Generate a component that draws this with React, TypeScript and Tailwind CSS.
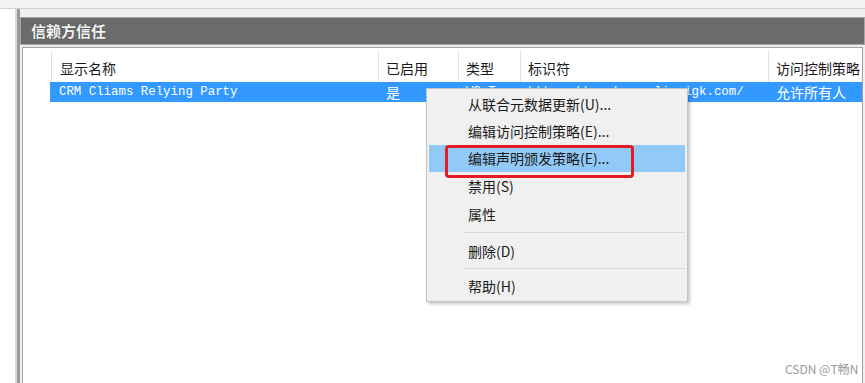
import React from "react";

const cjk = { fontFamily: '"Noto Sans CJK SC", "Noto Sans", sans-serif' };
const mono = { fontFamily: '"Liberation Mono", "Noto Sans CJK SC", monospace' };

function MenuItem({ label, h, active }: { label: string; h: string; active?: boolean }) {
  return (
    <div className={`${h} flex items-center pl-[39px] text-[14px] text-[#1b1b1b] ${active ? "bg-[#91c9f7]" : ""}`}>
      {label}
    </div>
  );
}

function Sep({ h, mt }: { h: string; mt: string }) {
  return (
    <div className={`${h} flex flex-col`}>
      <div className={`${mt} ml-[34px] h-[1px] bg-[#d7d7d7]`} />
    </div>
  );
}

export default function App() {
  return (
    <div className="relative w-[865px] h-[383px] overflow-hidden bg-[#f0f0f0] flex flex-col" style={cjk}>
      <div className="h-[8px] bg-[#f3f3f3]" />
      <div className="h-[1px] bg-[#d4d4d4]" />
      <div className="flex flex-1 min-h-0">
        <div className="w-[15px] bg-white" />
        <div className="w-[2px] bg-[#dadada]" />
        <div className="w-[3px] bg-[#9b9b9b]" />
        <div className="flex-1 flex flex-col pt-[8px] bg-[#f0f0f0] min-w-0">
          <div className="h-[28px] bg-[#6b6b6b] border border-[#a5a5a5] flex items-center px-[10px] text-[15px] font-bold text-[#f4f4f4] [text-shadow:0_0_1px_#333]">
            信赖方信任
          </div>
          <div className="h-[2px] bg-[#ececec]" />
          <div className="flex-1 mx-[2px] bg-white border-l border-t border-r border-[#a0a0a0] pt-[2px] flex flex-col">
            {/* column header */}
            <div className="h-[32px] flex text-[14px] text-[#1a1a1a]">
              <div className="w-[28px]" />
              <div className="w-[327px] border-l border-[#e3e3e3] flex items-center pt-[4px] pl-[8px]">显示名称</div>
              <div className="w-[80px] border-l border-[#e3e3e3] flex items-center pt-[4px] pl-[7px]">已启用</div>
              <div className="w-[62px] border-l border-[#e3e3e3] flex items-center pt-[4px] pl-[7px]">类型</div>
              <div className="w-[248px] border-l border-[#e3e3e3] flex items-center pt-[4px] pl-[7px]">标识符</div>
              <div className="flex-1 border-l border-[#e3e3e3] flex items-center pt-[4px] pl-[7px] whitespace-nowrap overflow-hidden">访问控制策略</div>
            </div>
            {/* selected row */}
            <div className="h-[20px] ml-[27px] bg-[#3399ff] flex items-center text-white whitespace-nowrap overflow-hidden">
              <div className="w-[328px] pl-[9px] text-[12.4px]" style={mono}>CRM Cliams Relying Party</div>
              <div className="w-[80px] pl-[8px] text-[14px]">是</div>
              <div className="w-[62px] pl-[8px] text-[12.4px]" style={mono}>WS-T</div>
              <div className="w-[248px] pl-[8px] text-[12.4px]" style={mono}>https://crmdemo.cliamigk.com/</div>
              <div className="flex-1 pl-[8px] text-[14px]">允许所有人</div>
            </div>
          </div>
        </div>
      </div>

      {/* context menu */}
      <div className="absolute left-[426px] top-[88px] w-[262px] bg-[#f0f0f0] border border-[#c4c4c4] shadow-[2px_2px_3px_rgba(0,0,0,0.22)] p-[2px] flex flex-col">
        <MenuItem label="从联合元数据更新(U)..." h="h-[27px]" />
        <MenuItem label="编辑访问控制策略(E)..." h="h-[27px]" />
        <MenuItem label="编辑声明颁发策略(E)..." h="h-[27px]" active />
        <MenuItem label="禁用(S)" h="h-[28px]" />
        <MenuItem label="属性" h="h-[28px]" />
        <Sep h="h-[9px]" mt="mt-[4px]" />
        <MenuItem label="删除(D)" h="h-[28px]" />
        <Sep h="h-[8px]" mt="mt-[3px]" />
        <MenuItem label="帮助(H)" h="h-[26px]" />
      </div>

      {/* red highlight box */}
      <div className="absolute left-[445px] top-[145px] w-[189px] h-[33px] border-[3px] border-[#e41b23] rounded-[4px]" />

      {/* watermark */}
      <div className="absolute left-[785px] top-[360px] text-[12px] text-[#9a9a9a] whitespace-nowrap">CSDN @T畅N</div>
    </div>
  );
}
